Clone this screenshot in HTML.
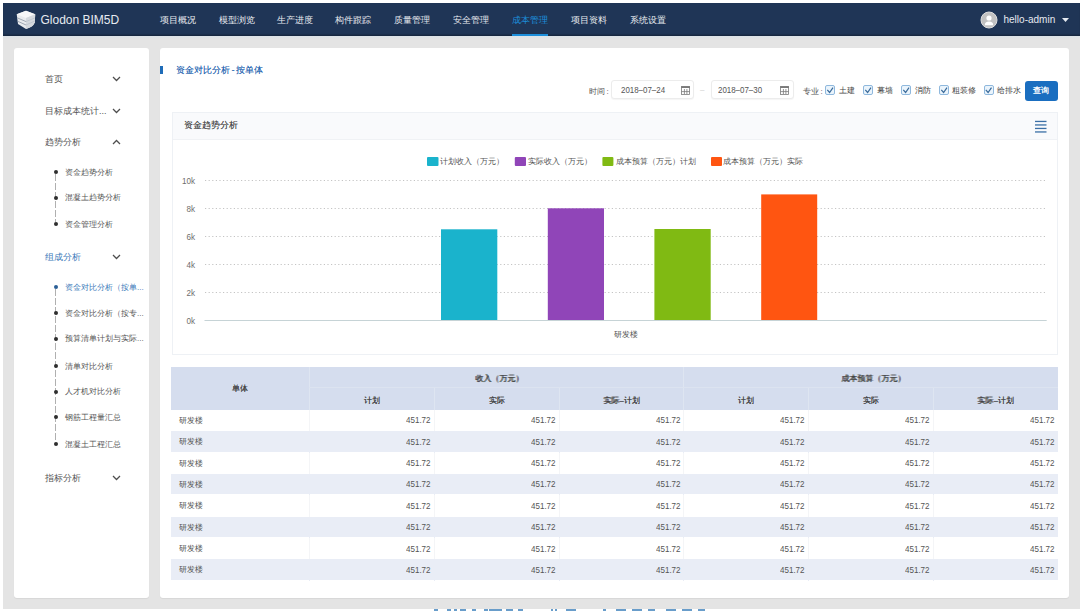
<!DOCTYPE html>
<html><head><meta charset="utf-8">
<style>
*{box-sizing:border-box;margin:0;padding:0}
html,body{width:1080px;height:611px;overflow:hidden;background:#fff;font-family:"Liberation Sans",sans-serif;position:relative}
.a{position:absolute;white-space:nowrap}
#bg{position:absolute;left:3px;top:3px;width:1077px;height:605.5px;background:#e4e4e4}
#hdr{position:absolute;left:3px;top:3px;width:1077px;height:33px;background:#1f3556;box-shadow:inset 0 -1.5px 1px rgba(0,0,0,.25)}
#hband{position:absolute;left:3px;top:36px;width:1077px;height:3px;background:linear-gradient(#dce3e8,#e4e4e4)}
.nav{position:absolute;top:14.6px;font-size:9px;color:#e8ebf0;line-height:11px;white-space:nowrap}
.nav.on{color:#1c8fdc}
#uline{position:absolute;left:512px;top:34px;width:36px;height:2px;background:#1c8fdc}
.panel{position:absolute;background:#fff;border-radius:3px;box-shadow:0 1px 1px rgba(0,0,0,.06)}
#side{left:14px;top:48px;width:135px;height:550px}
#main{left:160px;top:48px;width:909px;height:550px}
.sitem{position:absolute;left:45px;font-size:9px;color:#555;white-space:nowrap;line-height:12px}
.chev{position:absolute;left:112px;width:9px;height:6px}
.sub{position:absolute;left:65px;font-size:8px;color:#555;white-space:nowrap;line-height:10px;margin-top:0.8px}
.dot{position:absolute;left:53.9px;width:4px;height:4px;border-radius:50%;background:#2e2e2e}
.vl{position:absolute;left:55px;width:1px;background:repeating-linear-gradient(#b0b0b0 0 7px,transparent 7px 9px)}
.f8{font-size:8px;color:#555;line-height:10px}
.inp{position:absolute;top:80px;height:19px;width:82.5px;border:1px solid #ececec;border-radius:3px;background:#fff;box-shadow:0 1px 1px rgba(0,0,0,.04)}
.inp span{position:absolute;left:8.3px;top:3.6px;font-size:9px;color:#555;line-height:10px;transform:scaleX(.88);transform-origin:0 50%}
.cb{position:absolute;top:85px;width:10px;height:10px;border:1px solid #8fb8dd;background:#eaf4fc;border-radius:2px}
.cbl{position:absolute;top:86px;font-size:8px;color:#444;line-height:10px}
#card{position:absolute;left:171.5px;top:111.5px;width:886px;height:243px;border:1px solid #eef1f5;background:#fff}
#cardh{position:absolute;left:0;top:0;width:884px;height:27px;background:#f9fafc;border-bottom:1px solid #f0f2f5}
.yl{position:absolute;right:885px;font-size:8px;color:#666;line-height:10px}
table{position:absolute;left:171px;top:367.3px;width:886.7px;border-collapse:collapse;table-layout:fixed}
td,th{font-size:8px;line-height:10px;color:#555;font-weight:normal;border-left:1px solid #dee5f1;overflow:hidden;white-space:nowrap}
th{background:#d5ddee;color:#444;text-align:center;padding-top:4px;text-shadow:0.35px 0 0 #444}
td{height:21.36px;padding:0 3px 0 4px;text-align:right}
td:first-child{text-align:left;padding-left:7.5px;border-left:none !important}
tr.alt td{background:#e9edf6}
.n{display:inline-block;font-size:9px;transform:scaleX(.89);transform-origin:100% 50%}
td{border-left:1px solid #f4f5f7}
tr.alt td{border-left:1px solid #e9edf6;box-shadow:inset 0 -1px 0 #fff}
td{padding-top:0.8px !important}
.yl2{position:absolute;left:160px;width:35px;text-align:right;font-size:9px;line-height:10px;color:#6e6e6e;transform:scaleX(.9);transform-origin:100% 50%}
</style></head><body>
<div id="bg"></div>
<div id="hdr"></div><div id="hband"></div>
<!-- logo -->
<svg class="a" style="left:13px;top:8px" width="26" height="24" viewBox="0 0 26 24">
  <path d="M3.7 6.3 L13 2.8 L22.2 6.3 L21.8 14.5 Q20 19 13 21 L5 16 L3.7 6.3 Z" fill="#e9ebee"/>
  <path d="M3.7 6.3 L13 2.8 L22.2 6.3 L13 10 Z" fill="#f7f7f8"/>
  <path d="M13 10 L22.2 6.3 L21.8 14.5 Q20 19 13 21 Z" fill="#d5d9de"/>
  <path d="M4.2 9.8 L13 13.6 M4.6 13.2 L13 17" stroke="#98a1ae" stroke-width="0.9" fill="none"/><path d="M13 13.6 L21.9 9.9 M13 17 L21.8 13" stroke="#b9c0ca" stroke-width="0.7" fill="none"/>
</svg>
<div class="a" style="left:40.5px;top:13.5px;font-size:12px;line-height:13px;color:#e6eaf0">Glodon BIM5D</div>
<div class="nav" style="left:160.3px">项目概况</div>
<div class="nav" style="left:218.5px">模型浏览</div>
<div class="nav" style="left:277px">生产进度</div>
<div class="nav" style="left:335px">构件跟踪</div>
<div class="nav" style="left:393.8px">质量管理</div>
<div class="nav" style="left:452.5px">安全管理</div>
<div class="nav on" style="left:511.7px">成本管理</div>
<div class="nav" style="left:571px">项目资料</div>
<div class="nav" style="left:629.5px">系统设置</div>
<div id="uline"></div>
<!-- user -->
<svg class="a" style="left:980px;top:11px" width="18" height="18" viewBox="0 0 18 18">
  <circle cx="9" cy="9" r="8" fill="#c2c2c2" stroke="#dedede" stroke-width="1"/>
  <circle cx="9" cy="7" r="2.6" fill="#fff"/>
  <path d="M4.8 14.3 Q4.8 10.6 9 10.6 Q13.2 10.6 13.2 14.3 Z" fill="#fff"/>
</svg>
<div class="a" style="left:1003.5px;top:14px;font-size:10px;line-height:11px;color:#e6eaf0">hello-admin</div>
<svg class="a" style="left:1061.5px;top:18px" width="7" height="4" viewBox="0 0 7 4"><path d="M0 0 L7 0 L3.5 4 Z" fill="#e6eaf0"/></svg>

<!-- sidebar -->
<div class="panel" id="side"></div>
<div class="sitem" style="top:73px">首页</div>
<div class="sitem" style="top:104.7px">目标成本统计...</div>
<div class="sitem" style="top:135.8px">趋势分析</div>
<div class="sitem" style="top:251px;color:#3a78b8">组成分析</div>
<div class="sitem" style="top:471.6px">指标分析</div>
<svg class="chev" style="top:76px" viewBox="0 0 9 6"><path d="M1 1 L4.5 4.5 L8 1" stroke="#4e4e4e" stroke-width="1.25" fill="none"/></svg>
<svg class="chev" style="top:107.7px" viewBox="0 0 9 6"><path d="M1 1 L4.5 4.5 L8 1" stroke="#4e4e4e" stroke-width="1.25" fill="none"/></svg>
<svg class="chev" style="top:138.8px" viewBox="0 0 9 6"><path d="M1 5 L4.5 1.5 L8 5" stroke="#4e4e4e" stroke-width="1.25" fill="none"/></svg>
<svg class="chev" style="top:254px" viewBox="0 0 9 6"><path d="M1 1 L4.5 4.5 L8 1" stroke="#4e4e4e" stroke-width="1.25" fill="none"/></svg>
<svg class="chev" style="top:474.6px" viewBox="0 0 9 6"><path d="M1 1 L4.5 4.5 L8 1" stroke="#4e4e4e" stroke-width="1.25" fill="none"/></svg>
<div class="vl" style="top:174px;height:48px"></div>
<div class="dot" style="top:170.3px"></div>
<div class="dot" style="top:195.6px"></div>
<div class="dot" style="top:221.8px"></div>
<div class="sub" style="top:167.3px">资金趋势分析</div>
<div class="sub" style="top:192.6px">混凝土趋势分析</div>
<div class="sub" style="top:218.8px">资金管理分析</div>
<div class="vl" style="top:289px;height:153px"></div>
<div class="dot" style="top:285.2px;background:#2b5f96"></div>
<div class="dot" style="top:310.9px"></div>
<div class="dot" style="top:336.6px"></div>
<div class="dot" style="top:363.9px"></div>
<div class="dot" style="top:389.6px"></div>
<div class="dot" style="top:415.4px"></div>
<div class="dot" style="top:442px"></div>
<div class="sub" style="top:282.2px;color:#3a78b8">资金对比分析（按单...</div>
<div class="sub" style="top:307.9px">资金对比分析（按专...</div>
<div class="sub" style="top:333.6px">预算清单计划与实际...</div>
<div class="sub" style="top:360.9px">清单对比分析</div>
<div class="sub" style="top:386.6px">人才机对比分析</div>
<div class="sub" style="top:412.4px">钢筋工程量汇总</div>
<div class="sub" style="top:439px">混凝土工程汇总</div>

<!-- main -->
<div class="panel" id="main"></div>
<div class="a" style="left:160px;top:65.5px;width:3px;height:8px;background:#1f6cb8"></div>
<div class="a" style="left:176px;top:64.5px;font-size:9px;line-height:10px;color:#1f64b0;text-shadow:0.3px 0 0 rgba(31,100,176,.6)">资金对比分析<span style="display:inline-block;width:6px;text-align:center">-</span>按单体</div>

<div class="a f8" style="left:589px;top:86.5px">时间<span style="margin-left:1.5px">:</span></div>
<div class="inp" style="left:611.4px"><span>2018–07–24</span></div>
<div class="inp" style="left:711.4px"><span style="left:5.4px">2018–07–30</span></div>
<div class="a" style="left:700px;top:85px;font-size:8px;line-height:10px;color:#ccc">–</div>
<div class="a f8" style="left:803px;top:86.5px">专业<span style="margin-left:1.5px">:</span></div>
<div class="cb" style="left:825px"></div><div class="cbl" style="left:839px">土建</div>
<div class="cb" style="left:863px"></div><div class="cbl" style="left:877px">幕墙</div>
<div class="cb" style="left:901px"></div><div class="cbl" style="left:914.5px">消防</div>
<div class="cb" style="left:939px"></div><div class="cbl" style="left:952px">粗装修</div>
<div class="cb" style="left:983.5px"></div><div class="cbl" style="left:997px">给排水</div>
<div class="a" style="left:1024.5px;top:80.5px;width:33.5px;height:20px;background:#1a6ec0;border-radius:3px;color:#fff;font-size:8px;line-height:20px;text-align:center;font-weight:bold">查询</div>

<!-- chart card -->
<div id="card"><div id="cardh"></div></div>
<div class="a" style="left:184px;top:119.8px;font-size:9px;line-height:10px;color:#4a4a4a;text-shadow:0.3px 0 0 rgba(74,74,74,.7)">资金趋势分析</div>

<svg class="a" style="left:0;top:0" width="1080" height="611">
  <g fill="#1f6cb8">
  </g>
  <!-- menu icon -->
  <g fill="#3b6fa6">
    <rect x="1035" y="120.8" width="11.5" height="1.3"/>
    <rect x="1035" y="124.3" width="11.5" height="1.3"/>
    <rect x="1035" y="127.8" width="11.5" height="1.3"/>
    <rect x="1035" y="131.3" width="11.5" height="1.3"/>
  </g>
  <!-- calendar icons -->
  <g fill="none" stroke="#7a7a7a" stroke-width="0.8">
    <rect x="681.6" y="86.6" width="8" height="7.8"/>
    <rect x="780.6" y="86.6" width="8" height="7.8"/>
    <path d="M684.4 89 V94 M686.9 89 V94 M681.6 91.6 H689.6"/>
    <path d="M783.4 89 V94 M785.9 89 V94 M780.6 91.6 H788.6"/>
  </g>
  <g fill="#7a7a7a">
    <rect x="681.2" y="86.2" width="8.8" height="1.8"/>
    <rect x="780.2" y="86.2" width="8.8" height="1.8"/>
  </g>
  <!-- checks -->
  <g fill="none" stroke="#3a6a9a" stroke-width="1.2">
    <path d="M827.3 89.8 L829.6 92.5 L833 87.6"/>
    <path d="M865.3 89.8 L867.6 92.5 L871 87.6"/>
    <path d="M903.3 89.8 L905.6 92.5 L909 87.6"/>
    <path d="M941.3 89.8 L943.6 92.5 L947 87.6"/>
    <path d="M985.8 89.8 L988.1 92.5 L991.5 87.6"/>
  </g>
  <!-- gridlines -->
  <g stroke="#c4c4c4" stroke-width="1" stroke-dasharray="1.2 2.4">
    <line x1="205" y1="180.5" x2="1046.7" y2="180.5"/>
    <line x1="205" y1="208.5" x2="1046.7" y2="208.5"/>
    <line x1="205" y1="236.5" x2="1046.7" y2="236.5"/>
    <line x1="205" y1="264.5" x2="1046.7" y2="264.5"/>
    <line x1="205" y1="292.5" x2="1046.7" y2="292.5"/>
  </g>
  <line x1="204.5" y1="320.5" x2="1046.7" y2="320.5" stroke="#c6d3d6" stroke-width="1"/>
  <!-- bars -->
  <rect x="441" y="229.3" width="56.3" height="90.7" fill="#1ab3cc"/>
  <rect x="547.8" y="208.3" width="56.2" height="111.7" fill="#9045b8"/>
  <rect x="654.4" y="229" width="56.3" height="91" fill="#80ba13"/>
  <rect x="761.2" y="194.4" width="56" height="125.6" fill="#ff5511"/>
  <!-- legend -->
  <rect x="427" y="157" width="11.5" height="9" rx="1" fill="#1ab3cc"/>
  <rect x="514.8" y="157" width="11.2" height="9" rx="1" fill="#9045b8"/>
  <rect x="602.4" y="157" width="11" height="9" rx="1" fill="#80ba13"/>
  <rect x="711" y="157" width="11" height="9" rx="1" fill="#ff5511"/>
</svg>
<div class="a lg" style="left:440.4px;top:157px;font-size:8px;line-height:10px;color:#555">计划收入（万元）</div>
<div class="a lg" style="left:527.5px;top:157px;font-size:8px;line-height:10px;color:#555">实际收入（万元）</div>
<div class="a lg" style="left:615.6px;top:157px;font-size:8px;line-height:10px;color:#555">成本预算（万元）计划</div>
<div class="a lg" style="left:723.4px;top:157px;font-size:8px;line-height:10px;color:#555">成本预算（万元）实际</div>
<div class="a yl2" style="top:176.3px">10k</div>
<div class="a yl2" style="top:204.3px">8k</div>
<div class="a yl2" style="top:232.3px">6k</div>
<div class="a yl2" style="top:260.3px">4k</div>
<div class="a yl2" style="top:288.3px">2k</div>
<div class="a yl2" style="top:316.3px">0k</div>
<div class="a" style="left:613.5px;top:330px;font-size:8px;line-height:10px;color:#555">研发楼</div>

<!-- table -->
<table>
<colgroup><col style="width:138.7px"><col style="width:124.7px"><col style="width:124.7px"><col style="width:124.7px"><col style="width:124.7px"><col style="width:124.7px"><col style="width:124.5px"></colgroup>
<tr><th rowspan="2" style="height:42.5px;border-left:none;padding-top:0">单体</th><th colspan="3" style="height:20.7px;border-bottom:1px solid #dce3f0;padding-left:5px">收入（万元）</th><th colspan="3" style="border-bottom:1px solid #dce3f0;padding-left:5px">成本预算（万元）</th></tr>
<tr><th style="height:21.8px">计划</th><th>实际</th><th>实际–计划</th><th>计划</th><th>实际</th><th>实际–计划</th></tr>
<tr><td>研发楼</td><td><span class="n">451.72</span></td><td><span class="n">451.72</span></td><td><span class="n">451.72</span></td><td><span class="n">451.72</span></td><td><span class="n">451.72</span></td><td><span class="n">451.72</span></td></tr>
<tr class="alt"><td>研发楼</td><td><span class="n">451.72</span></td><td><span class="n">451.72</span></td><td><span class="n">451.72</span></td><td><span class="n">451.72</span></td><td><span class="n">451.72</span></td><td><span class="n">451.72</span></td></tr>
<tr><td>研发楼</td><td><span class="n">451.72</span></td><td><span class="n">451.72</span></td><td><span class="n">451.72</span></td><td><span class="n">451.72</span></td><td><span class="n">451.72</span></td><td><span class="n">451.72</span></td></tr>
<tr class="alt"><td>研发楼</td><td><span class="n">451.72</span></td><td><span class="n">451.72</span></td><td><span class="n">451.72</span></td><td><span class="n">451.72</span></td><td><span class="n">451.72</span></td><td><span class="n">451.72</span></td></tr>
<tr><td>研发楼</td><td><span class="n">451.72</span></td><td><span class="n">451.72</span></td><td><span class="n">451.72</span></td><td><span class="n">451.72</span></td><td><span class="n">451.72</span></td><td><span class="n">451.72</span></td></tr>
<tr class="alt"><td>研发楼</td><td><span class="n">451.72</span></td><td><span class="n">451.72</span></td><td><span class="n">451.72</span></td><td><span class="n">451.72</span></td><td><span class="n">451.72</span></td><td><span class="n">451.72</span></td></tr>
<tr><td>研发楼</td><td><span class="n">451.72</span></td><td><span class="n">451.72</span></td><td><span class="n">451.72</span></td><td><span class="n">451.72</span></td><td><span class="n">451.72</span></td><td><span class="n">451.72</span></td></tr>
<tr class="alt"><td>研发楼</td><td><span class="n">451.72</span></td><td><span class="n">451.72</span></td><td><span class="n">451.72</span></td><td><span class="n">451.72</span></td><td><span class="n">451.72</span></td><td><span class="n">451.72</span></td></tr>
</table>
<svg class="a" style="left:0;top:608px" width="1080" height="3"><g fill="#2a74b4" opacity="0.7"><rect x="434" y="1" width="4" height="2"/><rect x="447" y="1" width="4" height="2"/><rect x="454" y="1" width="3" height="2"/><rect x="460" y="1" width="6" height="2"/><rect x="472" y="1" width="4" height="2"/><rect x="484" y="1" width="4" height="2"/><rect x="489" y="1" width="13" height="2"/><rect x="506" y="1" width="7" height="2"/><rect x="518" y="1" width="5" height="2"/><rect x="551" y="1" width="2" height="2"/><rect x="555" y="1" width="2" height="2"/><rect x="566" y="1" width="10" height="2"/><rect x="603" y="1" width="3" height="2"/><rect x="616" y="1" width="10" height="2"/><rect x="632" y="1" width="10" height="2"/><rect x="648" y="1" width="7" height="2"/><rect x="666" y="1" width="10" height="2"/><rect x="682" y="1" width="10" height="2"/><rect x="698" y="1" width="7" height="2"/></g></svg>
</body></html>
